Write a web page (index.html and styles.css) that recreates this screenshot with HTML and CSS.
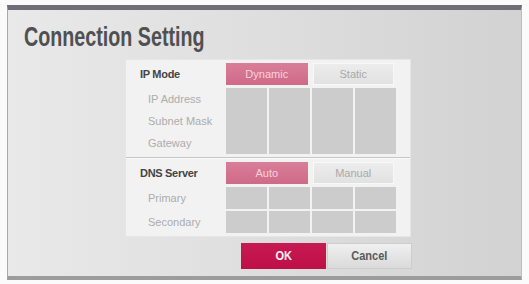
FILE: index.html
```html
<!DOCTYPE html>
<html>
<head>
<meta charset="utf-8">
<link rel="stylesheet" href="styles.css">
</head>
<body>
<div class="dialog">
  <div class="title"><span class="title-text">Connection Setting</span></div>
  <div class="panel">
    <div class="section">
      <div class="mode-row">
        <div class="label strong">IP Mode</div>
        <div class="modes">
          <div class="mode on">Dynamic</div>
          <div class="mode off">Static</div>
        </div>
      </div>
      <div class="fields tall">
        <div class="label sub r1">IP Address</div>
        <div class="label sub r2">Subnet Mask</div>
        <div class="label sub r3">Gateway</div>
        <div class="cell span c1"></div>
        <div class="cell span c2"></div>
        <div class="cell span c3"></div>
        <div class="cell span c4"></div>
      </div>
    </div>
    <div class="divider"></div>
    <div class="section">
      <div class="mode-row">
        <div class="label strong">DNS Server</div>
        <div class="modes">
          <div class="mode on">Auto</div>
          <div class="mode off">Manual</div>
        </div>
      </div>
      <div class="fields short">
        <div class="label sub">Primary</div>
        <div class="cell"></div>
        <div class="cell"></div>
        <div class="cell"></div>
        <div class="cell"></div>
        <div class="label sub">Secondary</div>
        <div class="cell"></div>
        <div class="cell"></div>
        <div class="cell"></div>
        <div class="cell"></div>
      </div>
    </div>
  </div>
  <div class="actions">
    <div class="btn ok"><span class="btn-text">OK</span></div>
    <div class="btn cancel"><span class="btn-text">Cancel</span></div>
  </div>
</div>
</body>
</html>
```

FILE: styles.css
```css
html, body {
  margin: 0;
  padding: 0;
  background: #fbfbfb;
}
body {
  width: 529px;
  height: 284px;
  overflow: hidden;
  font-family: "Liberation Sans", sans-serif;
}
.dialog {
  margin: 5px 0 0 7px;
  width: 515px;
  height: 275px;
  box-sizing: border-box;
  border-top: 5px solid #6e6e74;
  border-left: 1px solid #a9a9ab;
  border-right: 1px solid #bdbdbd;
  border-bottom: 4px solid #9c9c9c;
  background: linear-gradient(90deg, #e9e9e9 0%, #dedede 50%, #d2d2d2 100%);
  display: flex;
  flex-direction: column;
}
.title {
  padding: 5px 0 0 16px;
  box-sizing: border-box;
  height: 50px;
  line-height: 44px;
  font-size: 27px;
  font-weight: bold;
  color: #505052;
  white-space: nowrap;
}
.title-text {
  display: inline-block;
  transform: scaleX(0.73);
  transform-origin: left center;
}
.panel {
  margin-left: 118px;
  width: 284px;
  background: #f2f2f2;
  box-shadow: 0 0 0 1px #e6e6e6;
  display: flex;
  flex-direction: column;
}
.section {
  padding: 3px 0 3px 0;
  display: flex;
  flex-direction: column;
  gap: 3px;
}
.section + .section {
  padding-top: 4px;
}
.divider {
  height: 1px;
  background: #c6c6c6;
  border-bottom: 1px solid #fafafa;
}
.mode-row {
  display: flex;
  height: 22px;
  align-items: stretch;
}
.label {
  font-size: 11px;
  line-height: 22px;
  white-space: nowrap;
}
.mode-row .label {
  width: 100px;
  padding-left: 14px;
  box-sizing: border-box;
}
.strong {
  color: #444;
  font-weight: bold;
  letter-spacing: -0.3px;
}
.sub {
  color: #acacac;
  padding-left: 22px;
}
.modes {
  display: flex;
  gap: 5px;
  width: 168px;
}
.mode {
  flex: 1;
  text-align: center;
  font-size: 11px;
  line-height: 22px;
}
.mode.on {
  background: linear-gradient(180deg, #d97e98, #cf6a88);
  color: #f6d2dd;
}
.mode.off {
  background: linear-gradient(180deg, #ededed, #e1e1e1);
  box-shadow: inset 0 0 0 1px #f8f8f8;
  color: #a9a9a9;
}
.fields {
  display: grid;
  grid-template-columns: 98px repeat(4, 41px);
  column-gap: 2px;
}
.fields.tall {
  grid-template-rows: repeat(3, 22px);
}
.fields.short {
  grid-template-rows: 22px 22px;
  row-gap: 2px;
}
.r1 { grid-column: 1; grid-row: 1; }
.r2 { grid-column: 1; grid-row: 2; }
.r3 { grid-column: 1; grid-row: 3; }
.c1 { grid-column: 2; }
.c2 { grid-column: 3; }
.c3 { grid-column: 4; }
.c4 { grid-column: 5; }
.span { grid-row: 1 / span 3; }
.cell {
  background: #cccccc;
}
.actions {
  display: flex;
  gap: 1px;
  margin: 7px 0 0 233px;
  height: 26px;
}
.btn {
  width: 85px;
  text-align: center;
  line-height: 26px;
  font-size: 13px;
  font-weight: bold;
}
.btn-text {
  display: inline-block;
  transform: scaleX(0.85);
}
.ok {
  background: linear-gradient(180deg, #c81a52, #be0f48);
  color: #f4f0f2;
}
.cancel {
  background: linear-gradient(180deg, #f1f1f1, #d9d9d9);
  box-shadow: inset 0 0 0 1px #cdcdcd;
  color: #5a5a5a;
}
```
